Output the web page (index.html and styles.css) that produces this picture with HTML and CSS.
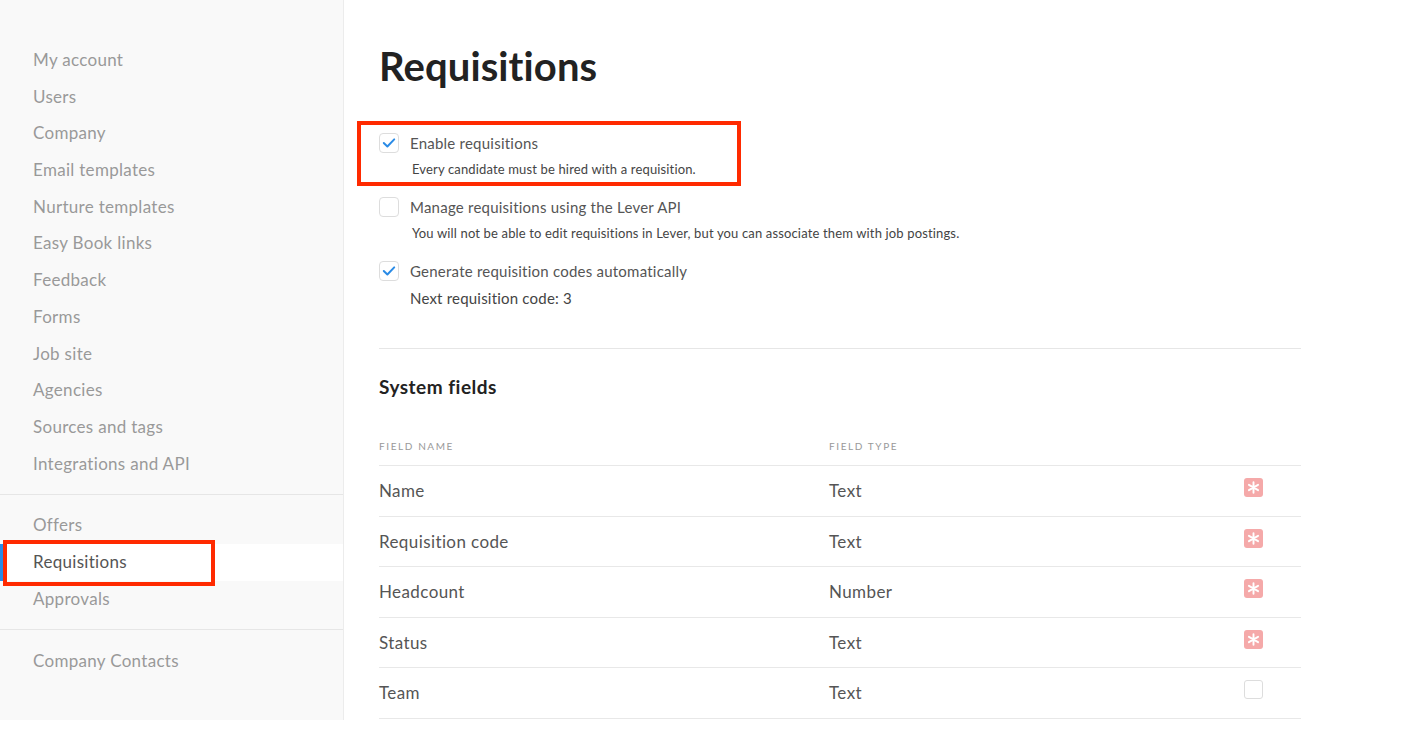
FILE: index.html
```html
<!DOCTYPE html>
<html>
<head>
<meta charset="utf-8">
<link rel="stylesheet" href="styles.css">
</head>
<body>
<div class="page">
  <aside class="sidebar">
    <nav class="nav-group first">
      <a class="nav-item">My account</a>
      <a class="nav-item">Users</a>
      <a class="nav-item">Company</a>
      <a class="nav-item">Email templates</a>
      <a class="nav-item">Nurture templates</a>
      <a class="nav-item">Easy Book links</a>
      <a class="nav-item">Feedback</a>
      <a class="nav-item">Forms</a>
      <a class="nav-item">Job site</a>
      <a class="nav-item">Agencies</a>
      <a class="nav-item">Sources and tags</a>
      <a class="nav-item">Integrations and API</a>
    </nav>
    <nav class="nav-group">
      <a class="nav-item">Offers</a>
      <a class="nav-item active">Requisitions<span class="highlight"></span></a>
      <a class="nav-item">Approvals</a>
    </nav>
    <nav class="nav-group last">
      <a class="nav-item">Company Contacts</a>
    </nav>
  </aside>
  <main class="main">
    <h1 class="title">Requisitions</h1>
    <div class="options">
      <div class="option">
        <span class="checkbox checked"><svg viewBox="0 0 20 20"><path d="M4.2 10 L8.2 13.9 L15.8 6" fill="none" stroke="#2a8be6" stroke-width="2.2" stroke-linecap="round" stroke-linejoin="round"/></svg></span>
        <div class="option-text">
          <div class="option-label">Enable requisitions</div>
          <div class="option-desc">Every candidate must be hired with a requisition.</div>
        </div>
        <span class="highlight"></span>
      </div>
      <div class="option">
        <span class="checkbox"></span>
        <div class="option-text">
          <div class="option-label">Manage requisitions using the Lever API</div>
          <div class="option-desc">You will not be able to edit requisitions in Lever, but you can associate them with job postings.</div>
        </div>
      </div>
      <div class="option">
        <span class="checkbox checked"><svg viewBox="0 0 20 20"><path d="M4.2 10 L8.2 13.9 L15.8 6" fill="none" stroke="#2a8be6" stroke-width="2.2" stroke-linecap="round" stroke-linejoin="round"/></svg></span>
        <div class="option-text">
          <div class="option-label">Generate requisition codes automatically</div>
          <div class="option-next">Next requisition code: 3</div>
        </div>
      </div>
    </div>
    <hr class="divider">
    <h2 class="subtitle">System fields</h2>
    <div class="table">
      <div class="row head">
        <div class="c-name">Field name</div>
        <div class="c-type">Field type</div>
        <div class="c-req"></div>
      </div>
      <div class="row">
        <div class="c-name">Name</div>
        <div class="c-type">Text</div>
        <div class="c-req"><span class="req"><svg viewBox="0 0 20 20"><path d="M10 4.5 V15.5 M5.2 7.2 L14.8 12.8 M14.8 7.2 L5.2 12.8" stroke="#fff" stroke-width="2" stroke-linecap="round"/></svg></span></div>
      </div>
      <div class="row">
        <div class="c-name">Requisition code</div>
        <div class="c-type">Text</div>
        <div class="c-req"><span class="req"><svg viewBox="0 0 20 20"><path d="M10 4.5 V15.5 M5.2 7.2 L14.8 12.8 M14.8 7.2 L5.2 12.8" stroke="#fff" stroke-width="2" stroke-linecap="round"/></svg></span></div>
      </div>
      <div class="row">
        <div class="c-name">Headcount</div>
        <div class="c-type">Number</div>
        <div class="c-req"><span class="req"><svg viewBox="0 0 20 20"><path d="M10 4.5 V15.5 M5.2 7.2 L14.8 12.8 M14.8 7.2 L5.2 12.8" stroke="#fff" stroke-width="2" stroke-linecap="round"/></svg></span></div>
      </div>
      <div class="row">
        <div class="c-name">Status</div>
        <div class="c-type">Text</div>
        <div class="c-req"><span class="req"><svg viewBox="0 0 20 20"><path d="M10 4.5 V15.5 M5.2 7.2 L14.8 12.8 M14.8 7.2 L5.2 12.8" stroke="#fff" stroke-width="2" stroke-linecap="round"/></svg></span></div>
      </div>
      <div class="row">
        <div class="c-name">Team</div>
        <div class="c-type">Text</div>
        <div class="c-req"><span class="req empty"></span></div>
      </div>
    </div>
  </main>
</div>
</body>
</html>
```

FILE: styles.css
```css
* { box-sizing: border-box; }
html, body { margin: 0; padding: 0; background: #fff; }
body {
  font-family: Lato, "Open Sans", sans-serif;
  color: #555;
  height: 752px;
  overflow: hidden;
}
.page {
  display: flex;
  align-items: flex-start;
}
.sidebar {
  width: 344px;
  height: 720px;
  flex: none;
  background: #f9f9f9;
  border-right: 1px solid #ececec;
  padding-top: 42px;
}
.nav-group {
  display: flex;
  flex-direction: column;
  border-top: 1px solid #e6e6e6;
  padding: 12px 0 12px;
}
.nav-group.first {
  border-top: none;
  padding-top: 0;
  padding-bottom: 12px;
}
.nav-group.last {
  padding-top: 13px;
}
.nav-item {
  position: relative;
  display: block;
  height: 36.7px;
  line-height: 36.7px;
  padding-left: 33px;
  font-size: 17px;
  letter-spacing: 0.3px;
  color: #999;
}
.nav-item.active {
  background: #fff;
  color: #555;
  box-shadow: inset 3px 0 0 #2a8be6;
}
.nav-item .highlight {
  position: absolute;
  left: 3px;
  top: -4px;
  width: 212px;
  height: 46px;
  border: 4px solid #ff2a00;
}
.main {
  flex: 1;
  padding: 0 105px 0 35px;
}
.title {
  margin: 40px 0 0;
  font-size: 40px;
  font-weight: 700;
  color: #222;
  line-height: 52px;
  letter-spacing: 0.1px;
}
.options {
  margin-top: 41px;
  display: flex;
  flex-direction: column;
  gap: 20px;
}
.option {
  position: relative;
  display: flex;
  gap: 11px;
}
.option .highlight {
  position: absolute;
  left: -22px;
  top: -12px;
  width: 384px;
  height: 65px;
  border: 4px solid #ff2a00;
}
.checkbox {
  width: 20px;
  height: 20px;
  flex: none;
  border: 1px solid #ddd;
  border-radius: 4px;
  background: #fff;
  display: flex;
}
.checkbox svg { width: 18px; height: 18px; }
.option-text {
  display: flex;
  flex-direction: column;
}
.option-label {
  font-size: 15px;
  line-height: 20px;
  letter-spacing: 0.23px;
  color: #555;
}
.option-desc {
  margin-top: 8px;
  padding-left: 2px;
  font-size: 13px;
  line-height: 16px;
  letter-spacing: 0.15px;
  color: #444;
}
.option-next {
  margin-top: 7px;
  font-size: 15px;
  line-height: 20px;
  letter-spacing: 0.2px;
  color: #444;
}
.divider {
  margin: 40px 0 0;
  border: none;
  border-top: 1px solid #e6e6e6;
}
.subtitle {
  margin: 26px 0 0;
  font-size: 19px;
  font-weight: 700;
  color: #222;
  line-height: 24px;
  letter-spacing: 0.5px;
}
.table {
  margin-top: 35px;
}
.row {
  display: flex;
  align-items: center;
  height: 50.5px;
  border-bottom: 1px solid #e8e8e8;
  font-size: 17px;
  letter-spacing: 0.4px;
  color: #555;
}
.row.head {
  height: 32px;
  align-items: flex-start;
  font-size: 10px;
  letter-spacing: 1.6px;
  text-transform: uppercase;
  color: #999;
  line-height: 24px;
}
.c-name { width: 450px; }
.c-type { flex: 1; }
.c-req { width: 57px; display: flex; }
.req {
  width: 19px;
  height: 19px;
  border-radius: 3px;
  background: #f5a9a9;
  display: flex;
  margin-top: -6px;
}
.req svg { width: 19px; height: 19px; }
.req.empty {
  background: #fff;
  border: 1px solid #ddd;
}
```
